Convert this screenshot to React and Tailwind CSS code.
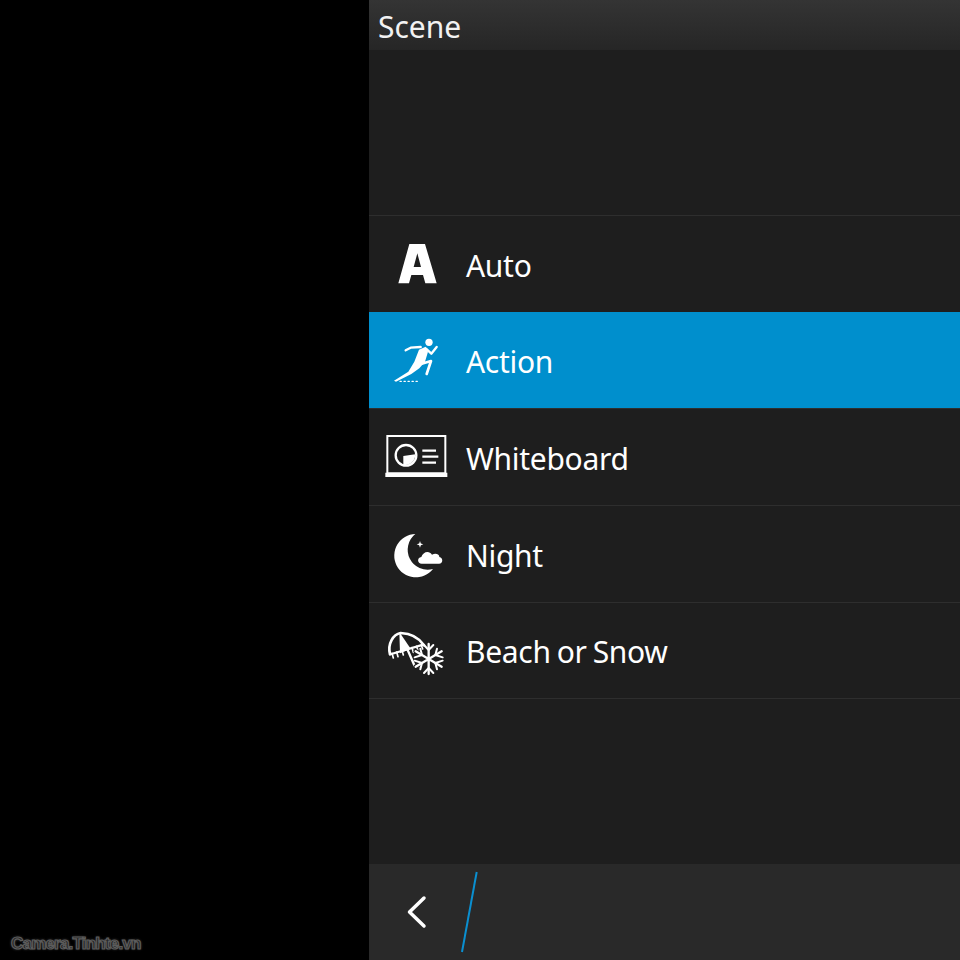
const SCENES = [
  { label: "Auto", icon: AutoIcon, height: "h-[97px]" },
  { label: "Action", icon: ActionIcon, height: "h-[96px]", active: true },
  { label: "Whiteboard", icon: WhiteboardIcon, height: "h-[97px]" },
  { label: "Night", icon: NightIcon, height: "h-[97px]" },
  { label: "Beach or Snow", icon: BeachIcon, height: "h-[96px]" },
];

function AutoIcon() {
  return (
    <svg className="w-[97px] h-[96px] shrink-0" viewBox="-3 -12 291 288" fill="#fff">
      <path fillRule="evenodd" d="M118 72H165L200 190H166L159 165H124L117 190H85ZM142 100L131 141H153Z" />
    </svg>
  );
}

function ActionIcon() {
  return (
    <svg className="w-[97px] h-[96px] shrink-0" viewBox="-3 279 291 288" fill="none" stroke="#fff" strokeLinecap="round" strokeLinejoin="round">
      <circle cx="177" cy="367" r="11" fill="#fff" stroke="none" />
      <path d="M72 482L115 455L133 425L147 389L167 380L174 395L165 425L148 445L124 462L78 485Z" fill="#fff" stroke="none" />
      <path d="M107 391L122 383L152 381" strokeWidth="7" />
      <path d="M168 386L184 401L200 381" strokeWidth="7" />
      <path d="M155 431L183 423L170 462" strokeWidth="8" />
      <path d="M90 484H143" strokeWidth="4" strokeDasharray="4 8" />
    </svg>
  );
}

function WhiteboardIcon() {
  return (
    <svg className="w-[97px] h-[96px] shrink-0" viewBox="-3 -21 291 288" fill="none" stroke="#fff">
      <rect x="52" y="60" width="174" height="112" strokeWidth="6" />
      <path d="M46 170H232V183H46Z" fill="#fff" stroke="none" />
      <circle cx="108" cy="118" r="31" strokeWidth="7" />
      <path d="M100 120L136 115C136 135 122 148 100 148Z" fill="#fff" stroke="none" />
      <path d="M157 104H198M157 122H205M157 140H198" strokeWidth="7" />
    </svg>
  );
}

function NightIcon() {
  return (
    <svg className="w-[97px] h-[96px] shrink-0" viewBox="-3 270 291 288" fill="#fff">
      <path d="M136 354A65 65 0 1 0 189 459A60 60 0 0 1 136 354Z" />
      <path d="M150 375L152.500 382.500L160 385L152.500 387.500L150 395L147.500 387.500L140 385L147.500 382.500Z" />
      <path d="M155 443C142 443 140 425 154 423C158 408 177 401 186 416C198 410 209 416 208 423C220 425 220 443 207 443Z" />
    </svg>
  );
}

function BeachIcon() {
  return (
    <svg className="w-[97px] h-[96px] shrink-0" viewBox="-3 561 291 288" fill="none" stroke="#fff" strokeLinecap="round" strokeLinejoin="round">
      <path d="M60 715C52 682 70 655 92 651C120 652 146 664 162 688" strokeWidth="8" />
      <path d="M88 648L122 698L90 712Z" fill="#fff" stroke="none" />
      <path d="M64 714L160 686" strokeWidth="7" />
      <path d="M66 712L70 726M80 708L84 722M96 703L100 717M126 695L130 709M140 691L144 705M154 687L158 699" strokeWidth="5" />
      <path d="M112 700L134 750H152" strokeWidth="7" />
      <path d="M176 684V774M137 706L215 752M215 706L137 752" stroke="#1e1e1e" strokeWidth="14" />
      <path d="M176 684V774M137 706L215 752M215 706L137 752" strokeWidth="7" />
      <path d="M162 687L176 702L190 687M162 771L176 756L190 771M134 724L156 717L151 698M218 724L196 717L201 698M134 734L156 741L151 760M218 734L196 741L201 760" strokeWidth="6" />
    </svg>
  );
}

export default function App() {
  return (
    <div className="relative flex w-[960px] h-[960px] bg-black overflow-hidden font-['Noto_Sans','Open_Sans',sans-serif]">
      <div className="w-[369px] shrink-0 bg-black" />

      <div className="flex flex-col flex-1 bg-[#1e1e1e]">
        {/* Title bar */}
        <div className="h-[50px] pl-[9px] pt-[3px] flex items-center bg-gradient-to-b from-[#343434] to-[#262626] text-[30px] text-[#f2f2f2]">
          Scene
        </div>

        {/* Scene list */}
        <div className="mt-[165px] border-b border-[#2e2e2e]">
          {SCENES.map((scene) => (
            <div
              key={scene.label}
              className={`${scene.height} flex items-center border-t ${
                scene.active ? "bg-[#008fcd] border-[#008fcd]" : "border-[#2e2e2e]"
              } text-[30px] text-white`}
            >
              <scene.icon />
              <span className="pt-[2px] tracking-[-0.3px] [word-spacing:-1.5px]">{scene.label}</span>
            </div>
          ))}
        </div>

        {/* Action bar */}
        <div className="mt-auto h-[96px] bg-[#292929] flex items-center">
          <svg className="w-[120px] h-[96px]" viewBox="369 864 120 96" fill="none" strokeLinecap="round" strokeLinejoin="round">
            <path d="M424 898L409.500 912L424 926" stroke="#fff" strokeWidth="3.500" />
            <path d="M476.700 872L462 952" stroke="#0a8fd0" strokeWidth="2" strokeLinecap="butt" />
          </svg>
        </div>
      </div>

      {/* Watermark */}
      <span className="absolute left-[11px] top-[931px] text-[17px] font-bold text-[#222] tracking-[-0.8px] [-webkit-text-stroke:1.2px_#5c5c5c] [text-shadow:0_0_3px_#555] font-['Liberation_Sans',sans-serif]">
        Camera.Tinhte.vn
      </span>
    </div>
  );
}
